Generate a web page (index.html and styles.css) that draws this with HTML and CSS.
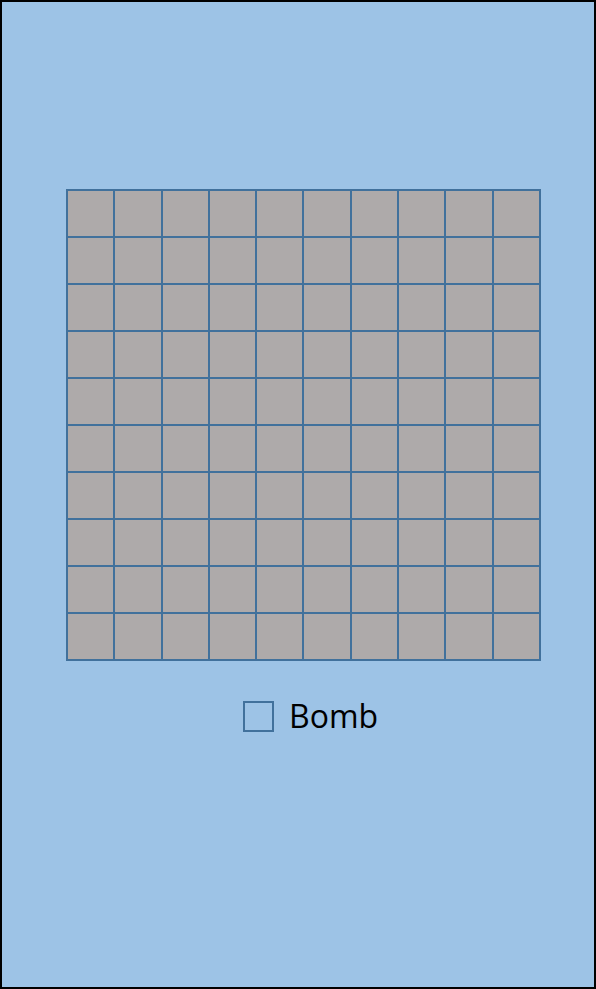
FILE: index.html
```html
<!DOCTYPE html>
<html>
<head>
<meta charset="utf-8">
<link rel="stylesheet" href="styles.css">
</head>
<body>
<div class="screen">
  <div class="board">
    <div class="cell"></div><div class="cell"></div><div class="cell"></div><div class="cell"></div><div class="cell"></div><div class="cell"></div><div class="cell"></div><div class="cell"></div><div class="cell"></div><div class="cell"></div>
    <div class="cell"></div><div class="cell"></div><div class="cell"></div><div class="cell"></div><div class="cell"></div><div class="cell"></div><div class="cell"></div><div class="cell"></div><div class="cell"></div><div class="cell"></div>
    <div class="cell"></div><div class="cell"></div><div class="cell"></div><div class="cell"></div><div class="cell"></div><div class="cell"></div><div class="cell"></div><div class="cell"></div><div class="cell"></div><div class="cell"></div>
    <div class="cell"></div><div class="cell"></div><div class="cell"></div><div class="cell"></div><div class="cell"></div><div class="cell"></div><div class="cell"></div><div class="cell"></div><div class="cell"></div><div class="cell"></div>
    <div class="cell"></div><div class="cell"></div><div class="cell"></div><div class="cell"></div><div class="cell"></div><div class="cell"></div><div class="cell"></div><div class="cell"></div><div class="cell"></div><div class="cell"></div>
    <div class="cell"></div><div class="cell"></div><div class="cell"></div><div class="cell"></div><div class="cell"></div><div class="cell"></div><div class="cell"></div><div class="cell"></div><div class="cell"></div><div class="cell"></div>
    <div class="cell"></div><div class="cell"></div><div class="cell"></div><div class="cell"></div><div class="cell"></div><div class="cell"></div><div class="cell"></div><div class="cell"></div><div class="cell"></div><div class="cell"></div>
    <div class="cell"></div><div class="cell"></div><div class="cell"></div><div class="cell"></div><div class="cell"></div><div class="cell"></div><div class="cell"></div><div class="cell"></div><div class="cell"></div><div class="cell"></div>
    <div class="cell"></div><div class="cell"></div><div class="cell"></div><div class="cell"></div><div class="cell"></div><div class="cell"></div><div class="cell"></div><div class="cell"></div><div class="cell"></div><div class="cell"></div>
    <div class="cell"></div><div class="cell"></div><div class="cell"></div><div class="cell"></div><div class="cell"></div><div class="cell"></div><div class="cell"></div><div class="cell"></div><div class="cell"></div><div class="cell"></div>
  </div>
  <label class="option">
    <span class="check"></span>
    <span class="label-text">Bomb</span>
  </label>
</div>
</body>
</html>
```

FILE: styles.css
```css
html, body {
  margin: 0;
  padding: 0;
}

.screen {
  box-sizing: border-box;
  width: 596px;
  height: 989px;
  border: 2px solid #000;
  background: #9dc3e6;
  display: flex;
  flex-direction: column;
  padding: 187px 0 0 64px;
  font-family: "Open Sans", "Liberation Sans", sans-serif;
}

.board {
  box-sizing: border-box;
  width: 475px;
  height: 472px;
  display: grid;
  grid-template-columns: repeat(10, 1fr);
  grid-template-rows: repeat(10, 1fr);
  gap: 2px;
  padding: 2px;
  background: #41719c;
}

.cell {
  background: #aeaaaa;
}

.option {
  display: flex;
  align-items: center;
  gap: 15px;
  margin: 39px 0 0 177px;
  height: 32px;
}

.check {
  box-sizing: border-box;
  width: 31px;
  height: 31px;
  border: 2px solid #41719c;
}

.label-text {
  font-size: 32px;
  line-height: 32px;
  color: #000;
}
```
